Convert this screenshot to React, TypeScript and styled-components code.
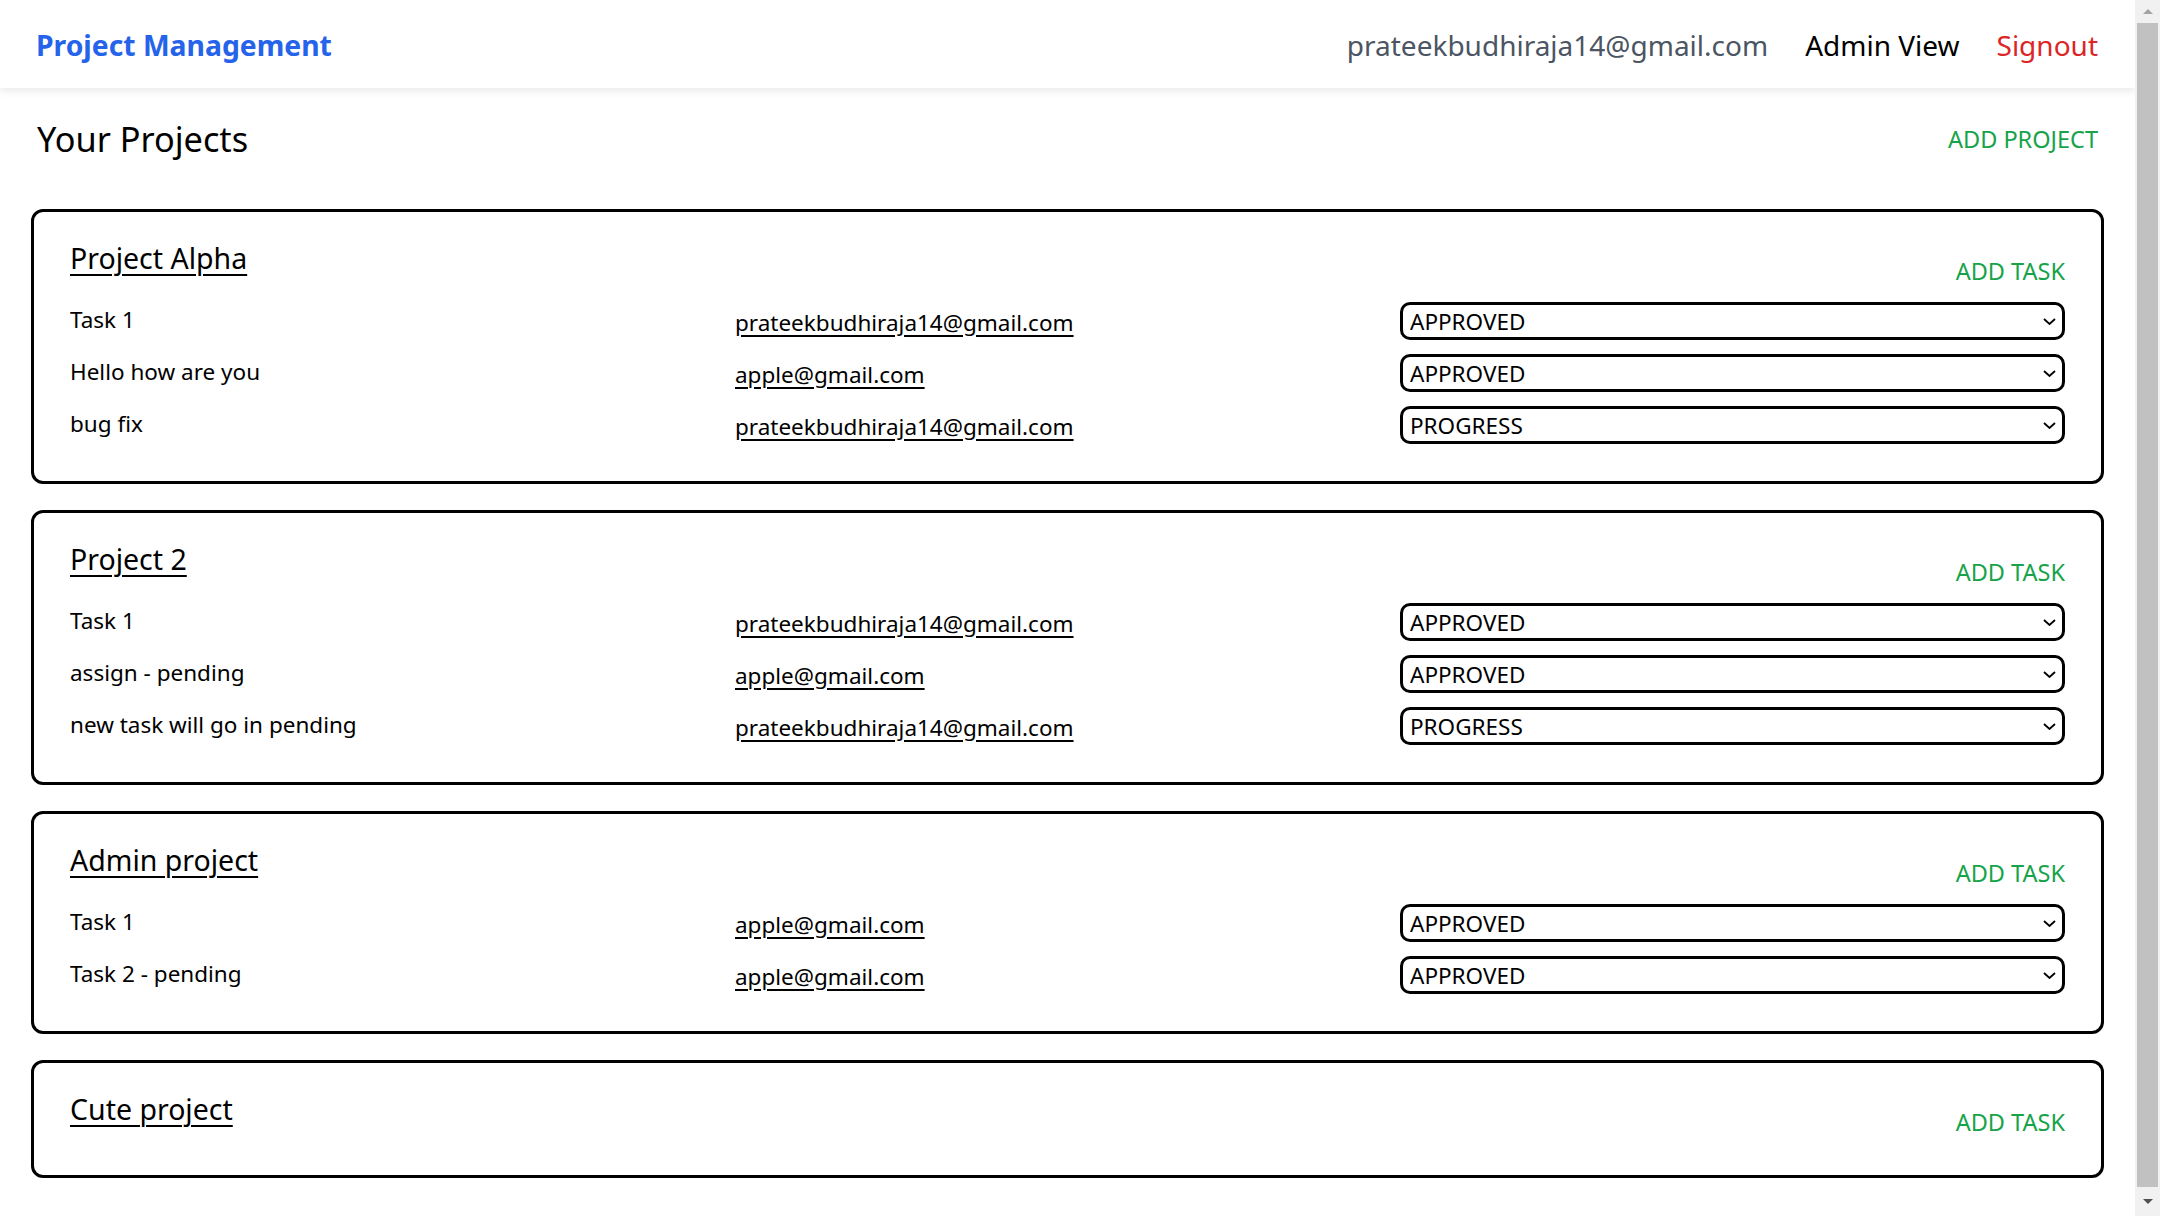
import React from "react";
import styled, { createGlobalStyle } from "styled-components";

const GlobalStyle = createGlobalStyle`
  body {
    margin: 0;
    background: #ffffff;
    font-family: "Noto Sans", "Open Sans", sans-serif;
    color: #000;
  }
  * { box-sizing: border-box; }
`;

const Page = styled.div`
  margin-right: 25px;
  min-height: 1216px;
`;

/* decorative window scrollbar drawn over the right edge of the viewport */
const ScrollRail = styled.div`
  position: fixed;
  top: 0;
  right: 0;
  width: 25px;
  height: 100vh;
  background: #f1f1f1;
  display: flex;
  flex-direction: column;
`;

const RailButton = styled.div<{ $h: number }>`
  height: ${(p) => p.$h}px;
  display: flex;
  align-items: center;
  justify-content: center;
`;

const Arrow = styled.span<{ $dir: "up" | "down" }>`
  width: 0;
  height: 0;
  border-left: 5px solid transparent;
  border-right: 5px solid transparent;
  ${(p) =>
    p.$dir === "up"
      ? "border-bottom: 5px solid #a3a3a3;"
      : "border-top: 5px solid #505050;"}
`;

const Thumb = styled.div`
  flex: 1;
  margin: 0 2px;
  background: #c1c1c1;
`;

const TopBar = styled.header`
  height: 88px;
  display: flex;
  align-items: center;
  justify-content: space-between;
  padding: 2px 37px 0 36px;
  background: #fff;
  box-shadow: 0 3px 8px rgba(0, 0, 0, 0.09);
`;

const Brand = styled.div`
  font-size: 28.3px;
  font-weight: 700;
  color: #2563eb;
`;

const Nav = styled.nav`
  display: flex;
  align-items: center;
  gap: 37px;
`;

const NavItem = styled.span<{ $tone: "muted" | "plain" | "danger" }>`
  font-size: 28px;
  color: ${(p) =>
    p.$tone === "muted" ? "#4b5563" : p.$tone === "danger" ? "#dc2626" : "#000"};
`;

const Main = styled.main`
  padding: 26px 31px 30px;
`;

const HeadingRow = styled.div`
  height: 50px;
  display: flex;
  align-items: center;
  justify-content: space-between;
  padding: 0 6px;
  margin-bottom: 45px;
`;

const Heading = styled.h1`
  margin: 0;
  font-size: 34.3px;
  font-weight: 400;
  line-height: 50px;
`;

const GreenAction = styled.button`
  border: none;
  background: none;
  padding: 0;
  font-family: inherit;
  font-size: 23.5px;
  color: #16a34a;
  text-transform: uppercase;
  cursor: pointer;
  line-height: 32px;
`;

const CardList = styled.div`
  display: flex;
  flex-direction: column;
  gap: 26px;
`;

const Card = styled.section`
  border: 3px solid #000;
  border-radius: 12px;
  padding: 26px 36px 37px;
`;

const CardHeader = styled.div`
  display: flex;
  justify-content: space-between;
  align-items: flex-start;
  height: 49px;
`;

const CardTitle = styled.a`
  font-size: 28.5px;
  line-height: 40px;
  color: #000;
  text-decoration: underline;
  text-underline-offset: 5px;
  text-decoration-thickness: 2px;
`;

const AddTask = styled(GreenAction)`
  margin-top: 17px;
`;

const TaskList = styled.div`
  display: flex;
  flex-direction: column;
  gap: 14px;
  margin-top: 15px;
`;

const TaskRow = styled.div`
  display: grid;
  grid-template-columns: repeat(3, 1fr);
  align-items: center;
  height: 38px;
`;

const TaskName = styled.span`
  font-size: 22.5px;
  line-height: 30px;
  margin-top: -2px;
`;

const Assignee = styled.a`
  justify-self: start;
  font-size: 22.5px;
  line-height: 30px;
  color: #000;
  text-decoration: underline;
  text-underline-offset: 4px;
  text-decoration-thickness: 2px;
  margin-top: 3px;
`;

const SelectWrap = styled.div`
  position: relative;
  height: 38px;
`;

const StatusSelect = styled.select`
  appearance: none;
  width: 100%;
  height: 38px;
  border: 3px solid #000;
  border-radius: 10px;
  background: #fff;
  padding: 0 30px 0 7px;
  font-family: inherit;
  font-size: 22.5px;
  color: #000;
  outline: none;
`;

const Chevron = styled.svg`
  position: absolute;
  right: 9px;
  top: 16px;
  pointer-events: none;
`;

type Task = { name: string; email: string; status: string };
type Project = { title: string; tasks: Task[] };

const P = "prateekbudhiraja14@gmail.com";
const A = "apple@gmail.com";

const projects: Project[] = [
  {
    title: "Project Alpha",
    tasks: [
      { name: "Task 1", email: P, status: "APPROVED" },
      { name: "Hello how are you", email: A, status: "APPROVED" },
      { name: "bug fix", email: P, status: "PROGRESS" },
    ],
  },
  {
    title: "Project 2",
    tasks: [
      { name: "Task 1", email: P, status: "APPROVED" },
      { name: "assign - pending", email: A, status: "APPROVED" },
      { name: "new task will go in pending", email: P, status: "PROGRESS" },
    ],
  },
  {
    title: "Admin project",
    tasks: [
      { name: "Task 1", email: A, status: "APPROVED" },
      { name: "Task 2 - pending", email: A, status: "APPROVED" },
    ],
  },
  { title: "Cute project", tasks: [] },
];

function StatusPicker({ value }: { value: string }) {
  return (
    <SelectWrap>
      <StatusSelect defaultValue={value}>
        <option value="PENDING">PENDING</option>
        <option value="PROGRESS">PROGRESS</option>
        <option value="APPROVED">APPROVED</option>
      </StatusSelect>
      <Chevron width="13" height="7" viewBox="0 0 13 7">
        <path d="M1 1l5.5 5L12 1" fill="none" stroke="#000" strokeWidth="1.8" />
      </Chevron>
    </SelectWrap>
  );
}

export default function App() {
  return (
    <Page>
      <GlobalStyle />
      <TopBar>
        <Brand>Project Management</Brand>
        <Nav>
          <NavItem $tone="muted">prateekbudhiraja14@gmail.com</NavItem>
          <NavItem $tone="plain">Admin View</NavItem>
          <NavItem $tone="danger">Signout</NavItem>
        </Nav>
      </TopBar>
      <Main>
        <HeadingRow>
          <Heading>Your Projects</Heading>
          <GreenAction>Add Project</GreenAction>
        </HeadingRow>
        <CardList>
          {projects.map((p) => (
            <Card key={p.title}>
              <CardHeader>
                <CardTitle href="#">{p.title}</CardTitle>
                <AddTask>Add Task</AddTask>
              </CardHeader>
              {p.tasks.length > 0 && (
                <TaskList>
                  {p.tasks.map((t, i) => (
                    <TaskRow key={i}>
                      <TaskName>{t.name}</TaskName>
                      <Assignee href="#">{t.email}</Assignee>
                      <StatusPicker value={t.status} />
                    </TaskRow>
                  ))}
                </TaskList>
              )}
            </Card>
          ))}
        </CardList>
      </Main>
      <ScrollRail aria-hidden>
        <RailButton $h={23}>
          <Arrow $dir="up" />
        </RailButton>
        <Thumb />
        <RailButton $h={29}>
          <Arrow $dir="down" />
        </RailButton>
      </ScrollRail>
    </Page>
  );
}
